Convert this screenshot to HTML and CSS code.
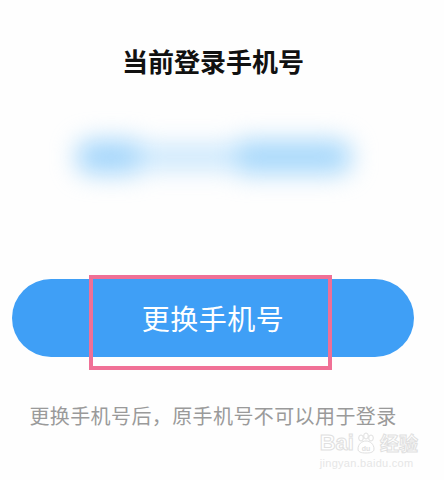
FILE: index.html
```html
<!DOCTYPE html>
<html lang="zh-CN">
<head>
<meta charset="utf-8">
<link rel="stylesheet" href="styles.css">
</head>
<body>
<div class="page">
  <h1 class="title">当前登录手机号</h1>
  <div class="phone">
    <div class="blur-row">
      <span class="blob blob-a"></span>
      <span class="blob blob-mid"></span>
      <span class="blob blob-b"></span>
    </div>
  </div>
  <div class="action">
    <div class="btn">更换手机号</div>
    <div class="highlight"></div>
  </div>
  <p class="note">更换手机号后，原手机号不可以用于登录</p>
  <div class="watermark">
    <div class="wm-logo"><span>Bai</span><span class="paw"><svg width="22" height="22" viewBox="0 0 22 22"><g fill="#fff" stroke="#e0e0e0" stroke-width="1"><ellipse cx="6" cy="6" rx="2.3" ry="3"/><ellipse cx="11" cy="4" rx="2.3" ry="3"/><ellipse cx="16" cy="6" rx="2.3" ry="3"/><path d="M3 17c0-5 4-8 8-8s8 3 8 8c0 3-3 4-8 4s-8-1-8-4z"/></g><text x="11" y="19" font-size="7" text-anchor="middle" fill="#e0e0e0" font-family="Liberation Sans, sans-serif" font-weight="bold">du</text></svg></span><span class="wm-cn">经验</span></div>
    <div class="wm-url">jingyan.baidu.com</div>
  </div>
</div>
</body>
</html>
```
FILE: styles.css
```css
html, body {
  margin: 0;
  padding: 0;
  background: #fefefe;
}
body {
  font-family: "Noto Sans CJK SC", "Noto Sans", sans-serif;
}
.page {
  position: relative;
  width: 426px;
  height: 480px;
  overflow: hidden;
}
.title {
  margin: 0;
  padding-top: 48px;
  font-size: 26px;
  line-height: 26px;
  font-weight: 700;
  color: #111;
  text-align: center;
}
.phone {
  height: 205px;
  padding-top: 66px;
  box-sizing: border-box;
}
.blur-row {
  display: flex;
  align-items: center;
  margin-left: 76px;
  height: 34px;
  filter: blur(12px);
}
.blob {
  display: block;
  height: 34px;
}
.blob-a {
  width: 62px;
  background: #a4d6fb;
  border-radius: 16px 0 0 16px;
}
.blob-mid {
  width: 100px;
  height: 24px;
  background: #c8e6fc;
}
.blob-b {
  width: 114px;
  background: #a7d8fb;
  border-radius: 0 16px 16px 0;
}
.action {
  position: relative;
  margin: 0 12px;
}
.btn {
  height: 78px;
  border-radius: 39px;
  background: #3f9ff6;
  color: #fff;
  font-size: 28px;
  line-height: 78px;
  text-align: center;
  letter-spacing: 0.5px;
}
.highlight {
  position: absolute;
  left: 77px;
  top: -4px;
  width: 235px;
  height: 87px;
  border: 4px solid #f07096;
}
.note {
  margin: 49px 0 0;
  font-size: 20px;
  line-height: 20px;
  letter-spacing: 0.4px;
  color: #9a9a9a;
  text-align: center;
}
.watermark {
  position: absolute;
  right: 8px;
  top: 432px;
  color: #fff;
  font-family: "Liberation Sans", sans-serif;
}
.wm-logo {
  display: flex;
  align-items: flex-end;
  font-size: 22px;
  font-weight: bold;
  line-height: 22px;
  color: #fff;
  -webkit-text-stroke: 1px #e0e0e0;
}
.paw {
  display: block;
  height: 22px;
  margin: 0 1px;
}
.wm-cn {
  font-family: "Noto Sans CJK SC", sans-serif;
  font-size: 19px;
  margin-left: 2px;
}
.wm-url {
  font-size: 11px;
  line-height: 14px;
  color: #e6e6e6;
  letter-spacing: 0.3px;
  margin-top: 2px;
}
```
